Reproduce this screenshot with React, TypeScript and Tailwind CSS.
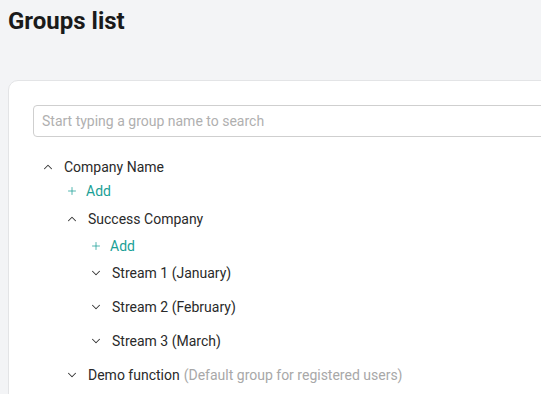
import { ChevronDown, ChevronUp, Plus } from "lucide-react";

type Node = {
  name: string;
  note?: string;
  open?: boolean;
  children?: Node[];
};

const tree: Node[] = [
  {
    name: "Company Name",
    open: true,
    children: [
      {
        name: "Success Company",
        open: true,
        children: [
          { name: "Stream 1 (January)" },
          { name: "Stream 2 (February)" },
          { name: "Stream 3 (March)" },
        ],
      },
      { name: "Demo function", note: "(Default group for registered users)" },
    ],
  },
];

function AddRow({ depth }: { depth: number }) {
  return (
    <div
      className={`flex items-center text-[#1a9f96] ${depth === 0 ? "h-[22px]" : "h-[20px]"}`}
    >
      <Plus size={12} strokeWidth={1.5} className="ml-[1px] mr-[8px]" />
      <span>Add</span>
    </div>
  );
}

function TreeItem({ node, depth }: { node: Node; depth: number }) {
  const Chevron = node.open ? ChevronUp : ChevronDown;
  return (
    <div>
      <div
        className={`flex items-center ${node.open && depth === 0 ? "h-[26px]" : "h-[34px]"}`}
      >
        <Chevron size={14} strokeWidth={1.75} className="mr-[9px] text-[#333]" />
        <span className="text-[#2a2a2a]">{node.name}</span>
        {node.note && <span className="ml-1 text-[#a8a8a8]">{node.note}</span>}
      </div>
      {node.open && (
        <div className="pl-6">
          <AddRow depth={depth} />
          {node.children?.map((c) => (
            <TreeItem key={c.name} node={c} depth={depth + 1} />
          ))}
        </div>
      )}
    </div>
  );
}

export default function App() {
  return (
    <div
      className="h-screen bg-[#f3f4f6] overflow-hidden pl-2"
      style={{ fontFamily: "Roboto, 'Liberation Sans', sans-serif" }}
    >
      <h1 className="pt-[5px] text-[24px] leading-[32px] font-bold text-[#1a1a1a]">
        Groups list
      </h1>
      <div className="mt-[43px] w-[560px] bg-white border border-[#e3e4e6] rounded-tl-[10px] pl-6 pt-6 pb-10 text-[14px]">
        <div className="h-[32px] border border-[#cfcfcf] rounded flex items-center px-2 text-[#b0b0b0]">
          Start typing a group name to search
        </div>
        <div className="mt-[17px] pl-2">
          {tree.map((n) => (
            <TreeItem key={n.name} node={n} depth={0} />
          ))}
        </div>
      </div>
    </div>
  );
}
